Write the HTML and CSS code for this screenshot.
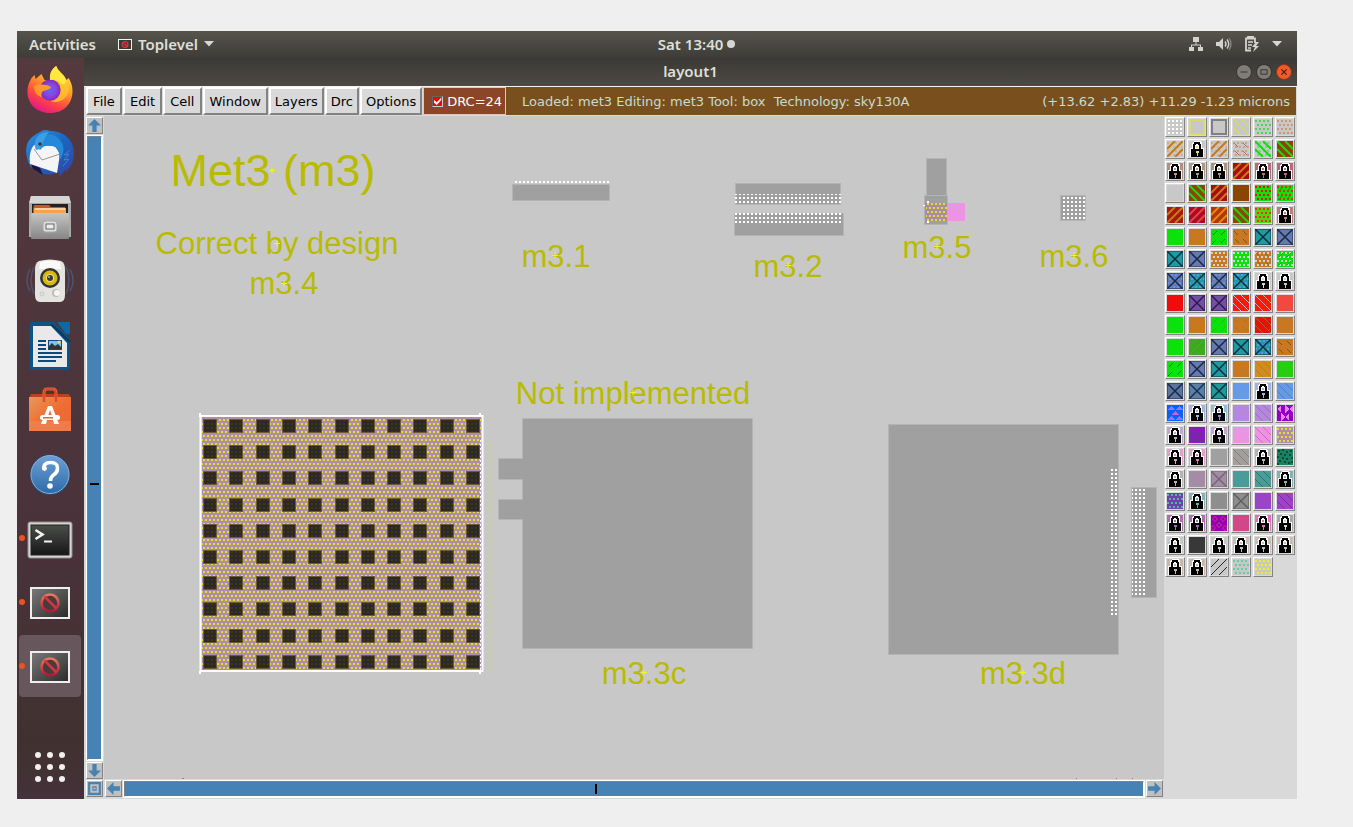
FILE: index.html
```html
<!DOCTYPE html>
<html lang="en">
<head>
<meta charset="utf-8">
<title>layout1</title>
<link rel="stylesheet" href="styles.css">
</head>
<body>
<div class="desktop">
  <header class="topbar">
    <div class="topbar-left">
      <button class="top-item">Activities</button>
      <button class="top-item app-menu">
        <svg width="14" height="11" viewBox="0 0 14 11"><rect x=".5" y=".5" width="13" height="10" fill="#3a3a3a" stroke="#f0f0f0"/><circle cx="7" cy="5.500" r="3" fill="#882a30" stroke="#d03a40" stroke-width="1.200"/><path d="M5 3.500l4 4" stroke="#e04848"/></svg>
        Toplevel
        <svg width="10" height="6" viewBox="0 0 10 6"><path d="M0 0h10L5 5.500z" fill="#d8d8d2"/></svg>
      </button>
    </div>
    <button class="top-item clock">Sat 13:40<span class="dot"></span></button>
    <div class="topbar-right">
      <svg width="16" height="16" viewBox="0 0 16 16" fill="#d4d4ce"><path d="M5 1h6v5H5zM1 11h5v4H1zM10 11h5v4h-5z"/><path d="M7.500 6h1v2.500H13V11h-1V9.500H4V11H3V8.500h4.500z"/></svg>
      <svg width="16" height="16" viewBox="0 0 16 16"><path d="M0 6h3l4-4v12l-4-4H0z" fill="#d4d4ce"/><path d="M9 5.500q2 2.500 0 5M11 3.500q3.500 4.500 0 9" fill="none" stroke="#d4d4ce" stroke-width="1.400"/><path d="M13 2q4 6 0 12" fill="none" stroke="#85857f" stroke-width="1.300"/></svg>
      <svg width="16" height="16" viewBox="0 0 16 16"><path d="M4 2.500V1h5v1.500h2V7M7 14.500H2V2.500h9" fill="none" stroke="#d4d4ce" stroke-width="1.800"/><path d="M4 6h5M4 9h4M4 12h3" stroke="#d4d4ce" stroke-width="1.500"/><path d="M12 6l-4 5h3l-2 5 6-6h-3l3-4z" fill="#d4d4ce"/></svg>
      <svg width="10" height="6" viewBox="0 0 10 6"><path d="M0 0h10L5 5.500z" fill="#d8d8d2"/></svg>
    </div>
  </header>

  <div class="workspace">
    <nav class="dock" aria-label="Dock">
      <button class="dock-item" aria-label="Firefox"><svg viewBox="0 0 48 48">
        <defs>
          <linearGradient id="ff1" x1=".8" y1="0" x2=".3" y2="1"><stop offset="0" stop-color="#fff04a"/><stop offset=".4" stop-color="#ffa02a"/><stop offset=".7" stop-color="#ff4a40"/><stop offset="1" stop-color="#e31587"/></linearGradient>
          <radialGradient id="ff2"><stop offset="0" stop-color="#5a6cf0"/><stop offset=".6" stop-color="#8a44e0"/><stop offset="1" stop-color="#7a2ac0"/></radialGradient>
        </defs>
        <path d="M24 47C10 47 1 37 1.500 25c.2-6 2-9 4-13l3-3 1 4 6-5 3 6 6 1c-2-7 1-12 6-15 1 5 8 8 10 14l2-2c2 3 4 7 4 13 0 13-9 22-22.500 22z" fill="url(#ff1)"/>
        <circle cx="24" cy="24" r="10.500" fill="url(#ff2)"/>
        <path d="M8 20c4-2 12-2 17 1-1 3-5 3-8 4-2 2-2 4-1 6-5-1-8-5-8-11z" fill="#ff9a2a"/>
        <path d="M24 14c6-2 11 3 11 10 0 6-5 11-11 11 9 4 19-3 19-13 0-4-2-8-5-11 1 5-1 6-3 6-3-3-7-4-11-3z" fill="#ffc830" opacity=".75"/>
        <path d="M24 14c0-7 2-11 6-14 1 5 8 8 10 14 0 4-2 5-4 4-3-3-8-5-12-4z" fill="#ffe840"/>
      </svg></button>
      <button class="dock-item" aria-label="Thunderbird"><svg viewBox="0 0 48 48">
        <defs><linearGradient id="tb1" x1="0" y1="0" x2="1" y2="1"><stop offset="0" stop-color="#2f8fe0"/><stop offset=".5" stop-color="#1b66c0"/><stop offset="1" stop-color="#3a3da0"/></linearGradient></defs>
        <path d="M14 2c4-3 8-2 10-1 14 0 24 9 24 22 0 10-5 17-9 19l1-3-7 8 1-5c-9 4-21 3-28-4-5-5-8-18-4-26 2-4 6-7 12-10z" fill="url(#tb1)"/>
        <path d="M3 30l4 9 10 6-3-7z" fill="#24123f"/>
        <path d="M8 15l21 1 5 8-3 19L4 34c-1-7 0-14 4-19z" fill="#f5f5f5"/>
        <path d="M8 19l8 11 18-6" fill="none" stroke="#999" stroke-width="1"/>
        <path d="M14 8c8-6 17-4 22 5 3 6 1 13-3 18 1-7 0-14-7-15-7-1-9 0-12 4l-4-4z" fill="#2688d8"/>
        <path d="M9 12c1-6 6-10 14-10-3 3-5 8-7 13-2 4-4 5-6 5-1-3-2-5-1-8z" fill="#3aa0e4"/><circle cx="14" cy="14" r="1.800" fill="#503030"/>
        <path d="M44 20l-6 5 5-1-5 6 5-1-6 7" fill="none" stroke="#2e8ad8" stroke-width="1"/>
      </svg></button>
      <button class="dock-item" aria-label="Files"><svg viewBox="0 0 48 48">
        <defs><linearGradient id="fi1" x1="0" y1="0" x2="0" y2="1"><stop offset="0" stop-color="#c4c4c4"/><stop offset="1" stop-color="#868686"/></linearGradient></defs>
        <path d="M5 2h38l2 8v33H3V10z" fill="#a9a9a9"/><path d="M5 2h38l2 7H3z" fill="#d6d6d6"/>
        <rect x="6" y="10" width="36" height="12" fill="#222"/><path d="M7 15l1-4h15l2 2h14l1 6H7z" fill="#cf5717"/><rect x="8" y="14" width="32" height="5" fill="#f6a34a"/><path d="M9 15h30" stroke="#fff" stroke-width="1"/>
        <rect x="5" y="19" width="38" height="26" rx="1" fill="url(#fi1)"/><rect x="17" y="27" width="14" height="11" rx="3" fill="#ddd" stroke="#aaa"/><rect x="20" y="30" width="8" height="5" fill="#eee" stroke="#666"/>
      </svg></button>
      <button class="dock-item" aria-label="Rhythmbox"><svg viewBox="0 0 48 48">
        <path d="M4 11q-6 12 0 22M8 9q-6 13 0 27M44 11q6 12 0 22M40 9q6 13 0 27" fill="none" stroke="#4c5470" stroke-width="1.500"/>
        <path d="M13 3q11-3 22 0 4 2 4 8v26q0 7-5 7H14q-5 0-5-7V11q0-6 4-8z" fill="#e3e3df"/><path d="M14 4q10-3 20 0l1 7H13z" fill="#fafafa"/>
        <circle cx="24" cy="20" r="10" fill="#333"/><circle cx="24" cy="20" r="7.500" fill="#d8b80c"/><circle cx="24" cy="20" r="4" fill="#eee080"/><circle cx="24" cy="20" r="3" fill="#383838"/><circle cx="23" cy="19" r="1" fill="#bbb"/>
        <circle cx="30" cy="35" r="4" fill="#bdbdb8"/><circle cx="31" cy="35" r="3" fill="#f5f5f2"/><circle cx="16" cy="36" r="2" fill="none" stroke="#c8c8c4"/>
      </svg></button>
      <button class="dock-item" aria-label="LibreOffice Writer"><svg viewBox="0 0 48 48">
        <path d="M6 0h22l16 17v28q0 3-3 3H7q-3 0-3-3V2q0-2 2-2z" fill="#0d5486"/><path d="M7 4h18l16 17v24H7z" fill="#e9e9e9"/><path d="M31 0h13v12H40z" fill="#0a6aa6"/><path d="M25 2l19 18" stroke="#083a60" stroke-width="2"/>
        <path d="M12 19h8M12 23h8M12 27h8M12 31h24M12 35h24M12 39h18" stroke="#0d4a78" stroke-width="2"/><rect x="22" y="18" width="14" height="10" fill="#0d4a78"/><rect x="23" y="19" width="12" height="8" fill="#7cc4ea"/><circle cx="33" cy="20" r="1.500" fill="#e8dc50"/><path d="M23 27v-3l3-3 3 3 3-2 3 3v2z" fill="#333"/>
      </svg></button>
      <button class="dock-item" aria-label="Ubuntu Software"><svg viewBox="0 0 48 48">
        <defs><linearGradient id="us1" x1="0" y1="0" x2="1" y2="1"><stop offset="0" stop-color="#e69a5c"/><stop offset=".5" stop-color="#ef6d32"/><stop offset="1" stop-color="#e8693a"/></linearGradient></defs>
        <path d="M5 8h38l2 4H3z" fill="#b9431b"/><rect x="3" y="11" width="42" height="34" fill="url(#us1)"/><rect x="3" y="35" width="42" height="10" fill="#f28350" opacity=".7"/>
        <path d="M18 16V7q0-4 3-4h6q3 0 3 4v9" fill="none" stroke="#ee6033" stroke-width="3"/><path d="M18 16V7q0-4 3-4h6q3 0 3 4v9" fill="none" stroke="#c04418" stroke-width="1"/>
        <path d="M15 38l7-18h4l7 18h-5l-1-4h-6l-1 4zM24 24l-2 6h4z" fill="#fff" fill-rule="evenodd"/><rect x="14" y="29" width="20" height="5" rx="2.500" fill="#fff"/><rect x="17" y="31" width="10" height="1.500" fill="#ec6426"/>
      </svg></button>
      <button class="dock-item" aria-label="Help"><svg viewBox="0 0 48 48">
        <defs><linearGradient id="he1" x1="0" y1="0" x2="0" y2="1"><stop offset="0" stop-color="#6d9fd8"/><stop offset="1" stop-color="#2d6ca6"/></linearGradient></defs>
        <circle cx="24" cy="25" r="20" fill="#2a4e74"/><circle cx="24" cy="24.500" r="19" fill="url(#he1)" stroke="#89aedb"/>
        <path d="M18 19.500q-1-7 6.500-7t7 6q0 4-4 6.500-3 2-3 6" fill="none" stroke="#fff" stroke-width="3.600"/><circle cx="18.500" cy="18.500" r="2.400" fill="#fff"/><circle cx="24" cy="36" r="2.800" fill="#fff"/>
      </svg></button>
      <button class="dock-item running" aria-label="Terminal"><svg viewBox="0 0 48 48">
        <defs><linearGradient id="te1" x1="0" y1="0" x2="0" y2="1"><stop offset="0" stop-color="#4c4e4c"/><stop offset="1" stop-color="#161616"/></linearGradient></defs>
        <rect x="2" y="8" width="44" height="36" rx="2" fill="#d5d5d3" stroke="#8e8e8c"/><rect x="5" y="11" width="38" height="30" fill="url(#te1)" stroke="#222"/>
        <path d="M9.500 16l7 4.500-7 4.500" fill="none" stroke="#f2f2f2" stroke-width="2.600"/><path d="M18 27.500h8" stroke="#f2f2f2" stroke-width="2"/>
      </svg></button>
      <button class="dock-item running" aria-label="Toplevel"><svg viewBox="0 0 48 48">
        <defs><linearGradient id="tk1" x1="0" y1="0" x2="1" y2="1"><stop offset="0" stop-color="#7a7a7a"/><stop offset="1" stop-color="#2a2a2a"/></linearGradient>
        <linearGradient id="tk2" x1="0" y1="0" x2="0" y2="1"><stop offset="0" stop-color="#ee7860"/><stop offset="1" stop-color="#b01838"/></linearGradient></defs>
        <rect x="5" y="10" width="38" height="30" fill="url(#tk1)" stroke="#eeeeec" stroke-width="2"/><circle cx="24" cy="25" r="8.500" fill="#4a3a3c" stroke="url(#tk2)" stroke-width="2.600"/><path d="M18.500 18.500l12 12" stroke="#d0363e" stroke-width="2.600"/>
      </svg></button>
      <button class="dock-item running active" aria-label="Toplevel, layout1"><svg viewBox="0 0 48 48">
        <rect x="5" y="10" width="38" height="30" fill="url(#tk1)" stroke="#eeeeec" stroke-width="2"/><circle cx="24" cy="25" r="8.500" fill="#4a3a3c" stroke="url(#tk2)" stroke-width="2.600"/><path d="M18.500 18.500l12 12" stroke="#d0363e" stroke-width="2.600"/>
      </svg></button>
      <button class="dock-item apps" aria-label="Show Applications"><svg viewBox="0 0 48 48" fill="#f0f0f0">
        <circle cx="12" cy="12" r="3"/><circle cx="24" cy="12" r="3"/><circle cx="36" cy="12" r="3"/><circle cx="12" cy="24" r="3"/><circle cx="24" cy="24" r="3"/><circle cx="36" cy="24" r="3"/><circle cx="12" cy="36" r="3"/><circle cx="24" cy="36" r="3"/><circle cx="36" cy="36" r="3"/>
      </svg></button>
    </nav>

    <main class="window">
      <div class="titlebar">
        <h1>layout1</h1>
        <div class="window-buttons">
          <button class="wbtn" aria-label="Minimize"><svg viewBox="0 0 16 16"><path d="M4 8h8" stroke="#3a3935" stroke-width="1.200"/></svg></button>
          <button class="wbtn" aria-label="Maximize"><svg viewBox="0 0 16 16"><rect x="4.500" y="5.500" width="7" height="5" fill="none" stroke="#3a3935" stroke-width="1.200"/></svg></button>
          <button class="wbtn close" aria-label="Close"><svg viewBox="0 0 16 16"><path d="M5 5l6 6M11 5l-6 6" stroke="#3a2018" stroke-width="1.300"/></svg></button>
        </div>
      </div>
      <div class="menubar">
        <button class="menu">File</button>
        <button class="menu">Edit</button>
        <button class="menu">Cell</button>
        <button class="menu">Window</button>
        <button class="menu tight">Layers</button>
        <button class="menu tight">Drc</button>
        <button class="menu tight">Options</button>
        <label class="drc"><input type="checkbox" checked>DRC=24</label>
        <div class="status"><span>Loaded: met3 Editing: met3 Tool: box&nbsp; Technology: sky130A</span><span>(+13.62 +2.83) +11.29 -1.23 microns</span></div>
      </div>
      <div class="editor">
        <div class="vscroll">
          <button class="arrow" aria-label="Scroll up"><svg viewBox="0 0 14 14"><path d="M7 1l6 6H9v6H5V7H1z"/></svg></button>
          <div class="track"><span class="mark"></span></div>
          <button class="arrow" aria-label="Scroll down"><svg viewBox="0 0 14 14"><path d="M7 13l6-6H9V1H5v6H1z"/></svg></button>
        </div>
        <svg class="canvas" role="img" aria-label="Layout view">
          <defs>
            <pattern id="err" width="4" height="4" patternUnits="userSpaceOnUse" x="3" y="1"><rect width="2" height="2" fill="#fff"/></pattern>
            <pattern id="via" width="4" height="8" patternUnits="userSpaceOnUse" x="3" y="3"><rect width="2" height="2" fill="#e6de2c"/><rect x="2" y="4" width="2" height="2" fill="#e6de2c"/></pattern>
            <pattern id="hole" width="4" height="4" patternUnits="userSpaceOnUse" x="3" y="3"><rect width="2" height="2" fill="#3c3814"/></pattern>
          </defs>
          <g transform="translate(-104 -116)">
            <g class="metal" transform="translate(.5 .5)">
              <rect x="512" y="184" width="97" height="16"/>
              <rect x="735" y="183" width="105" height="21"/><rect x="734" y="213" width="109" height="22"/>
              <rect x="926" y="158" width="20" height="40"/><rect x="924" y="195" width="23" height="29"/>
              <rect x="1060" y="195" width="25" height="25"/>
              <path d="M522 418h230v230H522V519h-24v-20h24v-20h-24v-21h24z"/>
              <rect x="888" y="424" width="230" height="230"/><rect x="1131" y="487" width="25" height="110"/>
            </g>
            <rect x="947" y="203" width="18" height="18" fill="#ec94e4"/>
            <rect x="925" y="203" width="22" height="18" fill="#a98ca4"/><rect x="926" y="203" width="21" height="18" fill="url(#via)"/>
            <path d="M927 201h2v2h-2zM927 221h2v2h-2zM923 205h2v1h-2z" fill="#fff"/>
            <g fill="url(#err)">
              <rect x="513" y="181" width="96" height="2"/>
              <rect x="735" y="194" width="106" height="10"/><rect x="735" y="213" width="108" height="10"/>
              <rect x="1061" y="196" width="24" height="24"/>
              <rect x="1111" y="468" width="7" height="147"/><rect x="1132" y="488" width="13" height="109"/>
            </g>
            <rect x="202" y="417" width="280" height="254" fill="#ae8ea6"/>
            <rect x="202" y="418" width="280" height="251" fill="url(#via)"/>
            <g id="holes"></g>
            <rect x="200.500" y="416" width="282" height="255" fill="none" stroke="#fff" stroke-width="2"/>
            <path d="M480.500 440v230" stroke="#fff" stroke-width="1" stroke-dasharray="2 2"/>
            <path d="M200 413v4M480 413v4M200 671v3M480 671v3" stroke="#fff" stroke-width="2"/>
            <g class="labels">
              <text x="273" y="186" class="big">Met3 (m3)</text>
              <text x="277" y="254">Correct by design</text><text x="284" y="294">m3.4</text>
              <text x="556" y="267">m3.1</text><text x="788" y="277">m3.2</text><text x="937" y="258">m3.5</text><text x="1074" y="267">m3.6</text>
              <text x="633" y="404">Not implemented</text><text x="644" y="684">m3.3c</text><text x="1023" y="684">m3.3d</text>
            </g>
            <path class="origins" transform="translate(0 .5)" d="M269 170h6M272 167v6M274 243h6M277 240v6M281 283h6M284 280v6M552 255h6M555 252v6M785 265h6M788 262v6M934 246h6M937 243v6M1071 255h6M1074 252v6M641 672h6M644 669v6M1020 672h6M1023 669v6M630 392h6M633 389v6"/>
            <path d="M1076 778.500h1M1116 778.500h1M1132 778.500h1M182 778.500h2" stroke="#888"/>
          </g>
        </svg>
        <button class="arrow corner" aria-label="Zoom to full view"><svg viewBox="0 0 14 14"><path fill-rule="evenodd" d="M1 1h12v12H1zM3 3v8h8V3zM5 5h4v4H5zM6 6v2h2V6z"/></svg></button>
        <div class="hscroll">
          <button class="arrow" aria-label="Scroll left"><svg viewBox="0 0 14 14"><path d="M1 7l6-6v4h6v4H7v4z"/></svg></button>
          <div class="track"><span class="mark"></span></div>
          <button class="arrow" aria-label="Scroll right"><svg viewBox="0 0 14 14"><path d="M13 7L7 1v4H1v4h6v4z"/></svg></button>
        </div>
        <aside class="palette" id="palette" aria-label="Layers"></aside>
      </div>
    </main>
  </div>
</div>
<script src="palette.js"></script>
</body>
</html>
```
FILE: styles.css
```css
* { box-sizing: border-box; }
body {
  margin: 0;
  min-height: 100vh;
  padding: 31px 56px 28px 17px;
  display: flex;
  background: #efefef;
  font-family: "DejaVu Sans", sans-serif;
  font-size: 13px;
}
button { font: inherit; padding: 0; margin: 0; border: 0; background: none; color: inherit; }
svg { display: block; }
.desktop { flex: 1; min-width: 0; display: flex; flex-direction: column; }

.topbar {
  display: flex;
  align-items: center;
  height: 27px;
  padding-bottom: 1px;
  background: linear-gradient(#56544a, #3d3c38);
  color: #dedfd9;
  font-family: "Noto Sans", sans-serif;
  font-size: 15px;
  font-weight: 600;
}
.topbar-left { flex: 8 1 0; display: flex; gap: 22px; padding-left: 12px; }
.topbar-right { flex: 7 1 0; display: flex; justify-content: flex-end; align-items: center; gap: 12px; padding-right: 15px; }
.top-item { display: flex; align-items: center; gap: 4px; white-space: nowrap; }
.app-menu { gap: 6px; }
.clock { padding-left: 4px; }
.dot { width: 8px; height: 8px; border-radius: 50%; background: #d6d6d0; }

.workspace { flex: 1; display: flex; min-height: 0; }
.dock {
  width: 67px;
  display: flex;
  flex-direction: column;
  background: linear-gradient(#54393f, #48323a 70%, #40312f 92%, #44313a);
}
.dock-item { position: relative; height: 64px; padding-right: 1px; display: grid; place-items: center; }
.dock-item svg { width: 48px; height: 48px; }
.dock-item.running::before {
  content: "";
  position: absolute;
  left: 2px;
  top: 29px;
  width: 6px;
  height: 6px;
  border-radius: 50%;
  background: #e95420;
}
.dock-item.active { margin: 1px 3px 1px 2px; padding: 0; height: 62px; border-radius: 4px; background: #67565c; }
.dock-item.active::before { left: 0; top: 28px; }
.dock-item.apps { margin-top: auto; }

.window { flex: 1; min-width: 0; display: flex; flex-direction: column; background: #d9d9d9; }
.titlebar {
  display: grid;
  grid-template-columns: 1fr auto 1fr;
  align-items: center;
  height: 28px;
  background: linear-gradient(#3a3935, #4d4a44);
  color: #dedfd9;
}
.titlebar h1 { grid-column: 2; margin: 0; padding-bottom: 2px; font: 600 15px "Noto Sans", sans-serif; }
.window-buttons { display: flex; justify-content: flex-end; gap: 4px; padding-right: 5px; }
.wbtn { width: 16px; height: 16px; border-radius: 50%; background: #7f7d75; border: 1px solid #33322e; }
.wbtn.close { background: #ee5a2a; border-color: #933415; }

.menubar { display: flex; height: 30px; padding: 0 1px 1px 2px; gap: 1px; border-top: 1px solid #f4f4f2; }
.menu {
  min-width: 36px;
  padding: 0 4px;
  border: 2px solid;
  border-color: #fff #828282 #828282 #fff;
  background: #d9d9d9;
  color: #000;
  white-space: nowrap;
}
.menu:nth-child(-n+4) { padding: 0 5px; }
.menu.tight { min-width: 0; }
.drc {
  display: flex;
  align-items: center;
  gap: 4px;
  padding: 0 3px 0 8px;
  border: 1px solid #d9c8c0;
  background: #8b4628;
  color: #fff;
  white-space: nowrap;
}
.drc input {
  appearance: none;
  margin: 0;
  width: 11px;
  height: 11px;
  border: 1px solid;
  border-color: #666 #ccc #ccc #666;
  background: #f00;
}
.drc input:checked::before {
  content: "";
  display: block;
  width: 9px;
  height: 9px;
  background: #fff;
  clip-path: polygon(10% 40%, 40% 65%, 90% 10%, 90% 40%, 40% 95%, 10% 70%);
}
.status {
  flex: 1;
  min-width: 0;
  display: flex;
  align-items: center;
  justify-content: space-between;
  margin-left: -1px;
  padding: 0 6px 0 16px;
  background: #79501d;
  color: #c6dcd0;
  white-space: nowrap;
}

.editor { flex: 1; display: grid; grid-template-columns: 20px 1fr 133px; grid-template-rows: 1fr 20px; }
.vscroll { grid-area: 1 / 1; display: flex; flex-direction: column; padding: 1px 1px 0 2px; }
.hscroll { grid-area: 2 / 2; display: flex; padding: 1px 1px 0 1px; }
.track { flex: 1; position: relative; background: #4682b4; border: 1px solid; border-color: #828282 #fff #fff #828282; outline: 1px solid #fff; margin: 2px 1px; }
.hscroll .track { margin: 1px 2px 2px 2px; }
.mark { position: absolute; background: #000; }
.vscroll .mark { left: 2px; right: 2px; top: 55.7%; height: 2px; }
.hscroll .mark { top: 2px; bottom: 2px; left: 46.2%; width: 2px; }
.arrow {
  width: 17px;
  height: 17px;
  background: #c0c0c0;
  border: 1px solid;
  border-color: #fff #828282 #828282 #fff;
}
.arrow svg { width: 15px; height: 15px; fill: #4682b4; }
.corner { grid-area: 2 / 1; margin: 1px 1px 0 2px; }
.canvas { grid-area: 1 / 2; width: 100%; height: 100%; background: #c8c8c8; }
.metal > * { fill: #a0a0a0; stroke: #b4b4b4; stroke-width: 1; }
.hole-base { fill: #2c2828; stroke: #6d5b36; stroke-width: 1; }
.labels { fill: #b9bb00; font: 31px "Liberation Sans", Arial, sans-serif; text-anchor: middle; }
.labels .big { font-size: 45px; }
.origins { stroke: #f4f420; stroke-width: 1; fill: none; }

.palette {
  grid-column: 3;
  grid-row: 1 / 3;
  display: grid;
  grid-template-columns: repeat(6, 20px);
  grid-auto-rows: 20px;
  gap: 2px;
  align-content: start;
  padding: 1px;
}
.swatch {
  padding: 1px;
  border: 1px solid;
  border-color: #fff #828282 #828282 #fff;
  background: #d9d9d9;
}
.swatch svg { width: 16px; height: 16px; shape-rendering: crispEdges; }
```
FILE: palette.js
```js
// Each swatch: base colour, then optional "style,colour" overlays.
const G = "c8c8c8", GR = "0be20b", OR = "c87820", TE = "209aa0", SL = "667aae", RD = "a80c0c", BR = "8a4500";
const rows = [
  [`${G} grid,ffffff`, `${G} box,dcd870`, `${G} box,808080`, `${G} back,e0d860`, `${G} dots,40dc50`, `${G} dots,d0986a`],
  [`${G} dots,d0b090 slash,${OR}`, `${G} lock,e4e070`, `${G} dots,d0b090 slash,${OR}`, `${G} dots,d0a080 bdash,a87048`, `${G} dots,70dc70 bold,0be20b`, `${BR} bold,0be20b`],
  [`b09080 lock,b09888`, `b09888 lock,b09888`, `b09080 lock,b09888`, `${RD} slash,${OR}`, `b86878 lock,b86878`, `b86878 lock,b86878`],
  [G, `${BR} bold,0be20b`, `${RD} slash,${OR}`, `${BR}`, `${GR} dots,f01010`, `${GR} dots,e03010 fdash,806010`],
  [`a81a08 slash,${OR}`, `b00824 slash,dc4848`, `b83408 slash,e08a10`, `8a4808 bold,0be20b`, `4cd80b dots,f03010`, `b88078 lock,b88078`],
  [GR, OR, `${GR} fdash,884010`, `${OR} bdash,885010`, `${TE} x,083040`, `${SL} x,182848`],
  [`${TE} x,083040`, `${SL} x,182848`, `${OR} dots,d4d4d4`, `${GR} dots,d4d4d4`, `${OR} dots,d4d4d4 bdash,a06020`, `${GR} dots,d4d4d4 fdash,b06020`],
  [`${SL} dots,5a98f0 x,182848`, `${TE} dots,5a98f0 x,083040`, `${SL} dots,6a90e0 x,182848`, `${TE} dots,5a98f0 x,083040`, `${G} lock,d8d8d8`, `${G} lock,c8c8c8`],
  ["ee0c0c", `7450a4 x,301850`, `7450a4 x,301850`, `fa1808 back,d8c0d0`, `fa1808 back,d8a0b0`, "f24840"],
  [GR, OR, `${GR} fdash,30b020`, `${OR} bdash,b87020`, `ee0c0c back,b86020`, OR],
  [GR, `40a820 thin,30c010`, `${SL} x,182848`, `${TE} x,083040`, `${TE} dots,5a98f0 x,083040`, `${OR} bdash,885010`],
  [`${GR} fdash,884010`, `${SL} x,182848`, `${TE} x,083040`, OR, `d08c20 back,c07c18`, "28cc10"],
  [`5c74a0 x,182848`, `5c80a4 x,183050`, `209898 x,083040`, "6699e8", `a0b4e0 lock,a0b4e0`, `6699e8 back,5080c0`],
  [`0860ff tri,a070e8`, `a0b4e0 lock,a0b4e0`, `90c0d0 lock,9088e0`, "b588e0", `b588e0 back,a070a8`, `9400c8 dia,e880f0`],
  [`c0a8d0 lock,c0a8d0`, `9018c0 rows,504080`, `c0a8d0 lock,c0a8d0`, "ec94e4", `ec94e4 back,d46cb8`, `ae8ea6 dots,e6de2c`],
  [`e0a0c8 lock,e0a0c8`, `e0a0c8 lock,e070a8`, "a0a0a0", `a0a0a0 back,948068`, `b4b4b4 lock,b4b4b4`, `188068 rough,0c5020`],
  [`b4b4b4 lock,b4b4b4`, "a48ca4", `a48ca4 x,706878`, "4a9c98", `4a9c98 back,307868`, `80b4b4 lock,80b4b4`],
  [`7040a8 dots,50b8a8`, `80b4b4 lock,60b0a8`, "8e8e8e", `8e8e8e x,606060`, "9c44c8", `9c44c8 back,882898`],
  [`b070b0 lock,a070b0`, `b070b0 lock,a070b0`, `9400b8 ring,b81898`, "d04888", `e070c0 lock,e070c0`, `a8a8a8 lock,d4d4d4`],
  [`${G} lock,c8c8a0`, "383838", `${G} lock,c8c8c8`, `c8beb4 lock,c8beb4`, `c8beb4 lock,c8beb4`, `c8beb4 lock,c8beb4`],
  [`c8b8ac lock,c8b8ac`, `c8b8ac lock,c8b8ac`, `${G} thin,282828`, `${G} dots,60d0a0`, `${G} dots,f0f020`]
];
const line = (d, c, w) => `<path class="smooth" d="${d}" stroke="${c}" stroke-width="${w}" fill="none" shape-rendering="auto"/>`;
const squares = (list, c, s) => list.map(([x, y]) => `<rect x="${x}" y="${y}" width="${s}" height="${s}" fill="${c}"/>`).join("");
const lattice = (step, stagger) => {
  const out = [];
  for (let r = 0; r < 4; r++) for (let k = 0; k < 4; k++) out.push([k * step + (r % 2 ? stagger : 0), r * 4 + 1]);
  return out;
};
const styles = {
  grid: c => squares(lattice(4, 0).map(([x, y]) => [x + 1, y]), c, 2),
  dots: c => squares(lattice(4, 2), c, 2),
  box: c => `<rect x="1" y="1" width="14" height="14" fill="none" stroke="${c}" stroke-width="2"/>`,
  back: c => line("M0 0l16 16M8 0l8 8M0 8l8 8", c, 1),
  bold: c => line("M0 0l16 16M8 0l8 8M0 8l8 8", c, 2),
  slash: c => line("M0 8l8-8M0 16L16 0M8 16l8-8", c, 2),
  thin: c => line("M0 8l8-8M0 16L16 0M8 16l8-8", c, 1),
  fdash: c => line("M2 6l4-4M10 6l4-4M1 15l4-4M10 14l4-4", c, 1),
  bdash: c => line("M1 2l4 4M10 2l4 4M2 10l4 4M10 10l4 4", c, 1),
  x: c => `<rect x=".5" y=".5" width="15" height="15" fill="none" stroke="${c}" stroke-opacity=".5"/>` + line("M0 0l16 16M16 0L0 16", c, 1.5),
  tri: c => `<path d="M0 5l4-4 4 4zM8 5l4-4 4 4zM0 15l4-4 4 4zM8 15l4-4 4 4zM4 10l4-4 4 4z" fill="${c}"/>`,
  dia: c => `<path d="M4 0v8L0 4zM8 0v8l4-4zM4 8v8l4-4zM12 8v8l-3-4zM16 0v8l-3-4z" fill="${c}"/>`,
  rows: c => line("M0 2h16M0 8h16M0 14h16", c, 1) + line("M2 5h4M10 5h4M0 11h3M7 11h4", c, 1),
  rough: c => squares([[1,1],[5,0],[9,2],[13,1],[3,4],[7,5],[12,5],[0,7],[5,8],[9,9],[14,8],[2,11],[7,12],[11,13],[0,14],[14,12]], c, 2),
  ring: c => [[4, 4], [12, 4], [8, 10], [2, 13], [14, 13]].map(([x, y]) => `<circle cx="${x}" cy="${y}" r="2" fill="none" stroke="${c}" stroke-width="1.5"/>`).join(""),
  lock: c => `<path d="M1 7h2V2l2-2h6l2 2v5h2v9H1z" fill="#fff"/><path d="M4 8V3h1V1h6v2h1v5h-2V4H9V3H7v1H6v4z" fill="#000"/><rect x="7" y="5" width="2" height="2" fill="${c}"/><rect x="2" y="8" width="12" height="8" fill="#000"/><path d="M7 10h3v2H9v3H8v-3H7z" fill="${c}"/>`
};
document.getElementById("palette").innerHTML = rows.flat().map(spec => {
  const [base, ...over] = spec.split(" ");
  const marks = over.map(o => { const [s, c] = o.split(","); return styles[s]("#" + c); }).join("");
  return `<button class="swatch" aria-label="Layer"><svg viewBox="0 0 16 16"><rect width="16" height="16" fill="#${base}"/>${marks}</svg></button>`;
}).join("");

// Contact holes of the large array: 11 columns by 10 rows.
let holes = "";
for (let r = 0; r < 10; r++) for (let c = 0; c < 11; c++) {
  const x = Math.round(203 + c * 26.3) + 0.5, y = Math.round(419 + r * 26.2) + 0.5;
  holes += `<rect class="hole-base" x="${x}" y="${y}" width="13" height="13"/><rect x="${x + 0.5}" y="${y + 0.5}" width="12" height="12" fill="url(#hole)"/>`;
}
document.getElementById("holes").innerHTML = holes;
```
